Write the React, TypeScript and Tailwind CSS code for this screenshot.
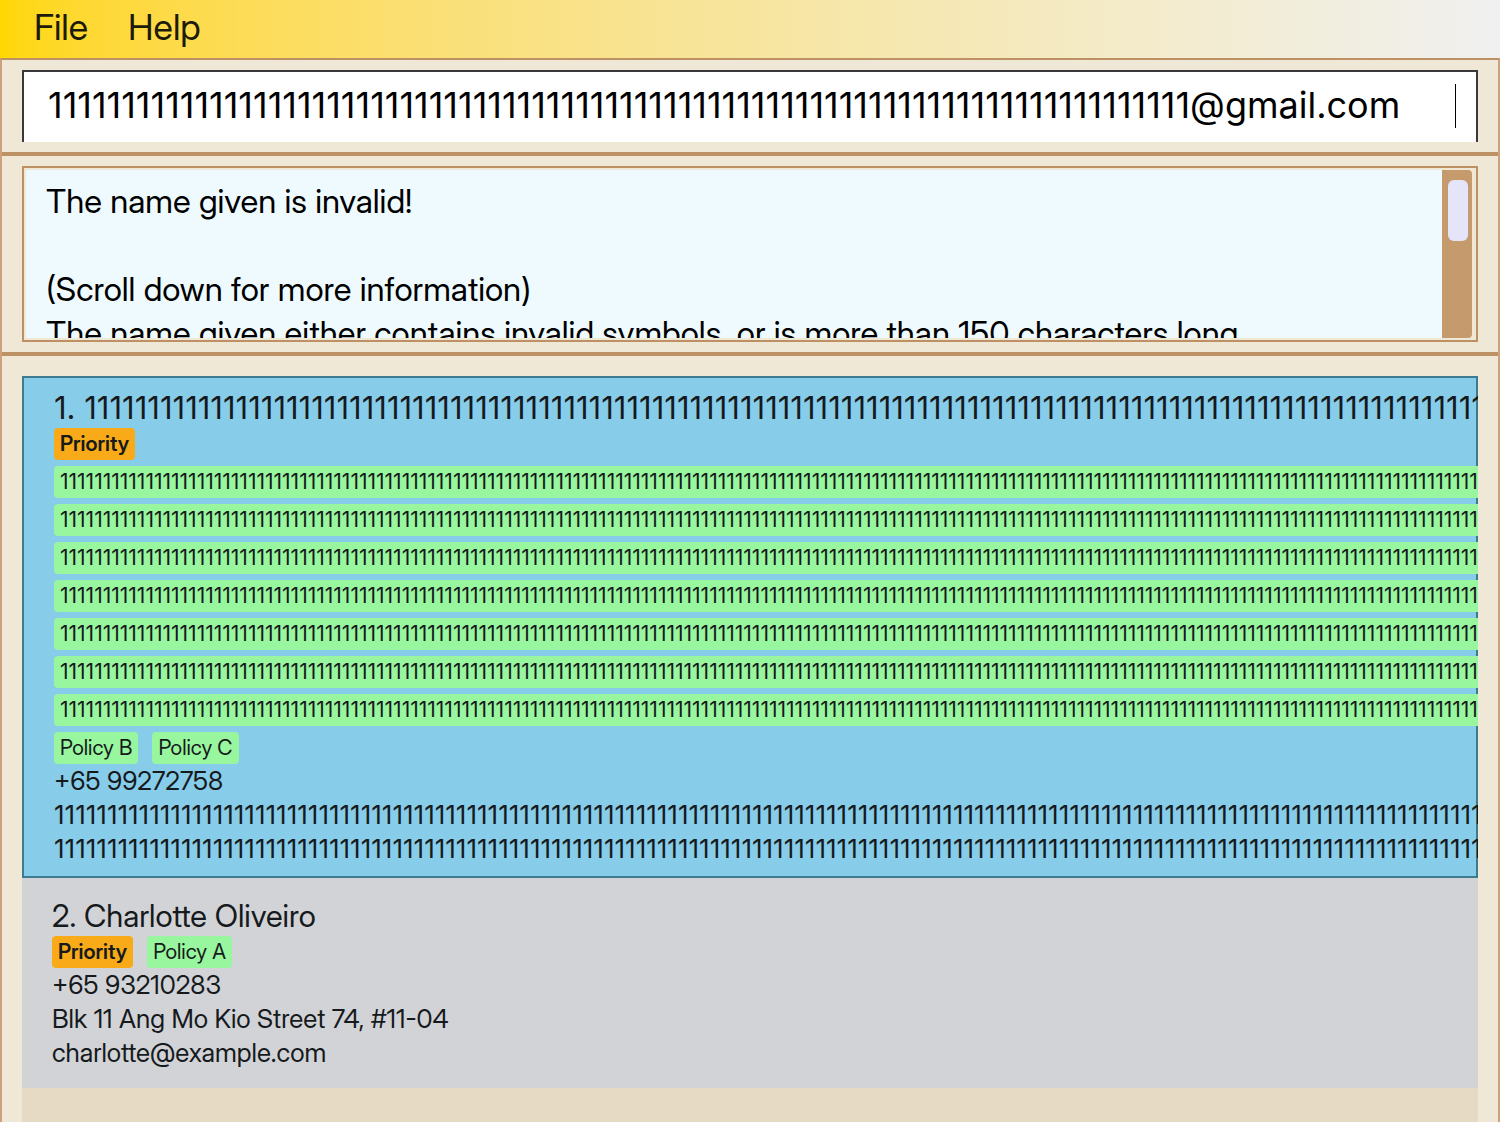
const ones = (count: number) => '1'.repeat(count);

type Person = {
  name: string;
  priority?: boolean;
  tagRows: string[][];
  phone: string;
  address: string;
  email: string;
  selected?: boolean;
};

const people: Person[] = [
  {
    name: ones(150),
    priority: true,
    tagRows: [
      [],
      [ones(180)],
      [ones(180)],
      [ones(180)],
      [ones(180)],
      [ones(180)],
      [ones(180)],
      [ones(180)],
      ['Policy B', 'Policy C'],
    ],
    phone: '+65 99272758',
    address: ones(160),
    email: ones(160),
    selected: true,
  },
  {
    name: 'Charlotte Oliveiro',
    priority: true,
    tagRows: [['Policy A']],
    phone: '+65 93210283',
    address: 'Blk 11 Ang Mo Kio Street 74, #11-04',
    email: 'charlotte@example.com',
  },
];

const cut = (text: string) => (/^\d{20,}$/.test(text) ? "font-['Inter',sans-serif]" : '');

function Tag({ text, priority = false }: { text: string; priority?: boolean }) {
  const tone = priority ? 'bg-[#f8aa18] font-semibold' : 'bg-[#98f69e]';
  return <span className={`h-8 shrink-0 rounded px-1.5 text-[21px] leading-8 ${tone} ${cut(text)}`}>{text}</span>;
}

function PersonCard({ person, index }: { person: Person; index: number }) {
  const surface = person.selected
    ? 'bg-[#87cdea] px-8 py-3 shadow-[inset_0_0_0_2px_#3e7b91]'
    : 'bg-[#d2d3d7] px-[30px] py-[18px]';
  return (
    <li className={`overflow-hidden whitespace-nowrap text-[#161a1c] ${surface}`}>
      <h2 className={`text-[31px] leading-10 ${cut(person.name)}`}>
        {index}. {person.name}
      </h2>
      <div className="flex flex-col gap-1.5">
        {person.tagRows.map((row, i) => (
          <div key={i} className="flex gap-3.5">
            {i === 0 && person.priority && <Tag text="Priority" priority />}
            {row.map((tag) => (
              <Tag key={tag} text={tag} />
            ))}
          </div>
        ))}
      </div>
      <div className="text-[26px] leading-[34px]">
        <p>{person.phone}</p>
        <p className={cut(person.address)}>{person.address}</p>
        <p className={cut(person.email)}>{person.email}</p>
      </div>
    </li>
  );
}

export default function App() {
  return (
    <div className="flex min-h-screen flex-col bg-[#f0e8d6] font-['Inter_Display','Inter',sans-serif]">
      <nav className="flex h-[58px] gap-10 bg-linear-to-r from-[#ffd700] to-[#f0f0f0] px-[34px] pb-1.5 text-[36px] text-[#1c1a08]">
        <button type="button">File</button>
        <button type="button">Help</button>
      </nav>
      <main className="flex grow flex-col border-x-2 border-t-2 border-x-[#cfa07c] border-t-[#bd9163]">
        <section className="border-b-4 border-[#bd9163] px-5 py-2.5">
          <div className="relative">
            <input
              type="text"
              aria-label="Command"
              defaultValue={`${ones(78)}@gmail.com`}
              className="block h-[72px] w-full border-2 border-b-0 border-[#39383b] bg-white px-6 pb-1 font-['Inter',sans-serif] text-[36px] text-black outline-none"
            />
            <span className="absolute top-3.5 right-[22px] h-11 w-px bg-black" />
          </div>
        </section>
        <section className="border-b-4 border-[#bd9163] px-5 py-2.5">
          <div className="flex h-44 border-2 border-[#bd9163] py-0.5 pr-1 pl-0.5">
            <textarea
              readOnly
              aria-label="Result"
              value={
                'The name given is invalid!\n\n(Scroll down for more information)\nThe name given either contains invalid symbols, or is more than 150 characters long.'
              }
              className="block min-w-0 grow resize-none overflow-hidden bg-[#effaff] px-5 pt-[9px] text-[33px] leading-[44px] text-black outline-none"
            />
            <div className="w-[30px] rounded-r bg-[#c59b6d] px-1.5 py-2.5 pr-1">
              <div className="h-[61px] rounded-md bg-[#e5e5fa]" />
            </div>
          </div>
        </section>
        <section className="flex grow flex-col px-5 pt-5">
          <ul className="grow bg-[#e6dac4]">
            {people.map((person, i) => (
              <PersonCard key={person.phone} person={person} index={i + 1} />
            ))}
          </ul>
        </section>
      </main>
    </div>
  );
}
